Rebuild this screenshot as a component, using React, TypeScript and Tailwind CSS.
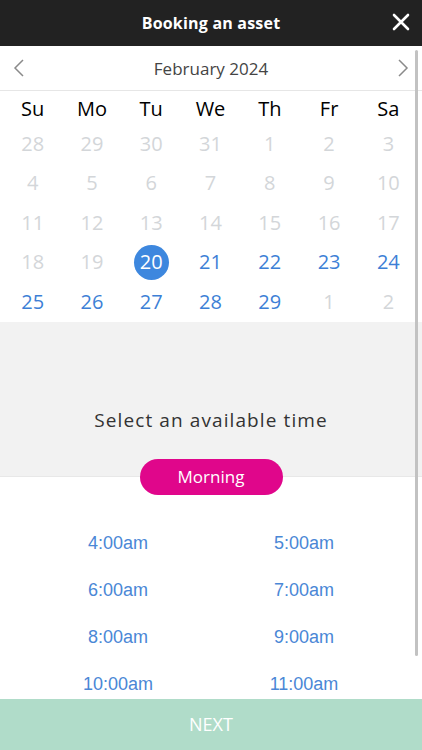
import React, { useState } from 'react';

type Day = { label: number; active: boolean };

const weekdays = ['Su', 'Mo', 'Tu', 'We', 'Th', 'Fr', 'Sa'];

const buildDays = (): Day[] => {
  const days: Day[] = [];
  [28, 29, 30, 31].forEach(d => days.push({ label: d, active: false }));
  for (let d = 1; d <= 29; d++) days.push({ label: d, active: d >= 20 });
  [1, 2].forEach(d => days.push({ label: d, active: false }));
  return days;
};

const times = ['4:00am', '5:00am', '6:00am', '7:00am', '8:00am', '9:00am', '10:00am', '11:00am'];

const App: React.FC = () => {
  const [selected, setSelected] = useState(20);
  const days = buildDays();

  return (
    <div className="relative w-[422px] h-[750px] overflow-hidden bg-white flex flex-col font-['Open_Sans',sans-serif]">
      {/* header */}
      <div className="h-[46px] shrink-0 bg-[#222222] flex items-center justify-center relative">
        <h1 className="text-white text-[16px] font-bold tracking-[0.2px]">Booking an asset</h1>
        <button className="absolute right-[9px] top-[10px] text-white">
          <svg width="24" height="24" viewBox="0 0 24 24" fill="none" stroke="currentColor" strokeWidth="2.6" strokeLinecap="round">
            <path d="M5 5l14 14M19 5L5 19" />
          </svg>
        </button>
      </div>

      <div className="flex-1 flex flex-col min-h-0">
        {/* month nav */}
        <div className="h-[45px] shrink-0 flex items-center justify-between px-[12px] border-b border-[#e6e6e6]">
          <svg width="14" height="20" viewBox="0 0 14 20" fill="none" stroke="#8a8a8a" strokeWidth="1.5">
            <path d="M11 2L3 10l8 8" />
          </svg>
          <span className="text-[17px] text-[#444444] mt-[1px]">February 2024</span>
          <svg width="14" height="20" viewBox="0 0 14 20" fill="none" stroke="#8a8a8a" strokeWidth="1.5">
            <path d="M3 2l8 8-8 8" />
          </svg>
        </div>

        {/* calendar */}
        <div className="grid grid-cols-7 px-[3px] pr-[4px]">
          {weekdays.map(w => (
            <div key={w} className="h-[33px] pt-[3px] flex items-center justify-center text-[20px] text-black">
              {w}
            </div>
          ))}
          {days.map((d, i) => (
            <div key={i} className="h-[39.5px] flex items-center justify-center">
              {d.active && d.label === selected ? (
                <span className="w-[35px] h-[35px] rounded-full bg-[#3d87de] text-white text-[20px] flex items-center justify-center">
                  {d.label}
                </span>
              ) : (
                <button
                  onClick={() => d.active && setSelected(d.label)}
                  className={`text-[20px] ${d.active ? 'text-[#3d7fd6]' : 'text-[#d3d6d9]'}`}
                >
                  {d.label}
                </button>
              )}
            </div>
          ))}
        </div>

        {/* time selection */}
        <div className="h-[155px] shrink-0 bg-[#f2f2f2] flex flex-col items-center pt-[84px] border-b border-[#e8e8e8]">
          <p className="text-[19px] text-[#333333] tracking-[1.1px]">Select an available time</p>
        </div>
        <div className="flex justify-center -mt-[18px]">
          <button className="w-[143px] h-[36px] rounded-full bg-[#e0068b] text-white text-[17px]">Morning</button>
        </div>

        <div className="grid grid-cols-2 pt-[37px] px-[25px] gap-y-[24px] font-['Liberation_Sans',Arial,sans-serif]">
          {times.map(t => (
            <button key={t} className="text-[18px] text-[#4a87d6] h-[23px] leading-[23px]">
              {t}
            </button>
          ))}
        </div>
      </div>

      {/* footer */}
      <button className="absolute left-0 bottom-0 w-full h-[51px] bg-[#b0dcc9] text-white text-[18px]">NEXT</button>

      {/* scrollbar */}
      <div className="absolute right-[4px] top-[50px] w-[3px] h-[606px] rounded-full bg-[#c2c2c2]" />
    </div>
  );
};

export default App;
